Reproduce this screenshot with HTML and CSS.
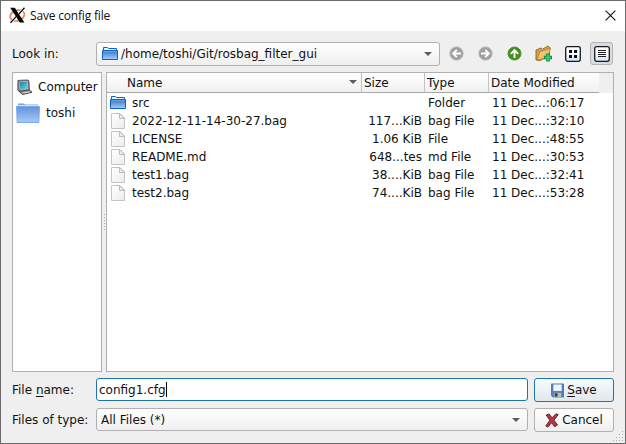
FILE: index.html
```html
<!DOCTYPE html>
<html lang="en">
<head>
<meta charset="utf-8">
<title>Save config file</title>
<link rel="stylesheet" href="styles.css">
</head>
<body>
<svg class="defs" width="0" height="0" aria-hidden="true">
  <defs>
    <linearGradient id="blue" x1="0" y1="0" x2="0" y2="1"><stop offset="0" stop-color="#3272c4"/><stop offset="1" stop-color="#a9cdfb"/></linearGradient>
    <linearGradient id="home" x1="0" y1="0" x2="0" y2="1"><stop offset="0" stop-color="#6594d9"/><stop offset="1" stop-color="#a5c8fa"/></linearGradient>
    <linearGradient id="screen" x1="0" y1="0" x2="1" y2="1"><stop offset="0" stop-color="#0b7a9c"/><stop offset="1" stop-color="#7fd6ee"/></linearGradient>
    <linearGradient id="paper" x1="0" y1="0" x2="1" y2="1"><stop offset="0" stop-color="#fff"/><stop offset="1" stop-color="#ececec"/></linearGradient>
    <linearGradient id="gold" x1="0" y1="0" x2="1" y2="1"><stop offset="0" stop-color="#ffe5a3"/><stop offset="1" stop-color="#dba044"/></linearGradient>
    <linearGradient id="tile" x1="0" y1="0" x2="0" y2="1"><stop offset="0.4" stop-color="#fff"/><stop offset="1" stop-color="#cfe3fa"/></linearGradient>
    <symbol id="folder" viewBox="0 0 16 16">
      <path d="M1.5 4V1.5H5.5L6.5 2.5H14.5V4" fill="#e4f0ff" stroke="#0c63c4"/>
      <path d="M.5 4.5H15.5V13.5H.5Z" fill="url(#blue)" stroke="#0c63c4"/>
      <path d="M1.5 5.5H14.5" stroke="#6ba3e8"/>
    </symbol>
    <symbol id="file" viewBox="0 0 16 18">
      <path d="M1.5 1.5H10L14.5 6V16.5H1.5Z" fill="url(#paper)" stroke="#c4c4c4"/>
      <path d="M9.5 1.5V6.5H14.5Z" fill="#eee" stroke="#b0b0b0" stroke-width=".8"/>
    </symbol>
  </defs>
</svg>
<main class="window">
  <header class="titlebar">
    <svg class="logo" width="17" height="17" viewBox="0 0 17 17">
      <ellipse cx="8.3" cy="8.5" rx="7.3" ry="5.2" transform="rotate(-20 8.3 8.5)" fill="none" stroke="#ee8050" stroke-width="1.7"/>
      <path d="M1.2 .8H5.8L15.4 15.6H10.8Z" fill="#050505"/>
      <path d="M15.5 .8L9.8 7.2M6.8 10L1.6 15.8" stroke="#fff" stroke-width="2.6"/>
      <path d="M15.5 .8L9.4 7.6M7.4 9.4L1.5 15.8" stroke="#111" stroke-width="1.4"/>
    </svg>
    <span class="title">Save config file</span>
    <svg class="close" width="11" height="11" viewBox="0 0 11 11"><path d="M.6 .6L10.4 10.4M10.4 .6L.6 10.4" stroke="#111" stroke-width="1.1"/></svg>
  </header>

  <section class="lookin">
    <span class="label">Look in:</span>
    <div class="combo path">
      <svg width="16" height="16"><use href="#folder"/></svg>
      <span>/home/toshi/Git/rosbag_filter_gui</span>
      <i class="arrow"></i>
    </div>
    <nav class="tools">
      <span class="tool"><svg width="16" height="16" viewBox="0 0 16 16"><circle cx="7.5" cy="7.5" r="6.6" fill="#a0a0a0" stroke="#b2b2b2"/><path d="M12 7.5H4.5M7.8 3.8L4.1 7.5L7.8 11.2" fill="none" stroke="#fff" stroke-width="1.9"/></svg></span>
      <span class="tool"><svg width="16" height="16" viewBox="0 0 16 16"><circle cx="7.5" cy="7.5" r="6.6" fill="#a0a0a0" stroke="#b2b2b2"/><path d="M3 7.5H10.5M7.2 3.8L10.9 7.5L7.2 11.2" fill="none" stroke="#fff" stroke-width="1.9"/></svg></span>
      <span class="tool"><svg width="16" height="16" viewBox="0 0 16 16"><circle cx="7.5" cy="7.5" r="6.5" fill="#428f1e" stroke="#4c9130"/><path d="M7.5 12V4.5M3.8 7.8L7.5 4.1L11.2 7.8" fill="none" stroke="#fff" stroke-width="1.9"/></svg></span>
      <span class="tool"><svg width="17" height="17" viewBox="0 0 17 17"><path d="M1 15V5L6 3L7.5 4.2L13 1L14.5 2V11L5 15.5Z" fill="#d9a048" stroke="#8b6427" stroke-width=".9"/><path d="M2 15L5 6.5L9.5 5.5L15.5 3L13.5 11.5L6 14.5Z" fill="url(#gold)" stroke="#a97a32" stroke-width=".8"/><path d="M13 8.5V16.5M9 12.5H17" stroke="#15833c" stroke-width="3.6"/><path d="M13 9.3V15.7M9.8 12.5H16.2" stroke="#35c967" stroke-width="2"/></svg></span>
      <span class="tool"><svg width="16" height="16" viewBox="0 0 16 16"><rect x=".7" y=".7" width="14.6" height="14.6" rx="2" fill="url(#tile)" stroke="#151a24" stroke-width="1.3"/><path d="M4 4h3v3H4zM9 4h3v3H9zM4 9h3v3H4zM9 9h3v3H9z" fill="#111"/></svg></span>
      <span class="tool active"><svg width="16" height="16" viewBox="0 0 16 16"><rect x=".7" y=".7" width="14.6" height="14.6" rx="2" fill="url(#tile)" stroke="#151a24" stroke-width="1.3"/><path d="M4 4.5H12M4 6.5H12M4 8.5H12M4 10.5H12" stroke="#222"/></svg></span>
    </nav>
  </section>

  <section class="panes">
    <aside class="sidebar">
      <div class="place">
        <svg width="17" height="17" viewBox="0 0 18 18"><path d="M3 13L14 11.5L17 14L7 16.5Z" fill="#999" stroke="#444"/><path d="M2 1.5L12.5 1L13.7 2L14.2 11.5L4 13L2 12Z" fill="#777" stroke="#444" stroke-width=".8"/><path d="M3.5 3L12 2.5L12.5 10.5L4 11.3Z" fill="url(#screen)" stroke="#a9d3dd" stroke-width=".7"/><path d="M8 14.8L14.5 13.5" stroke="#ddd"/></svg>
        <span>Computer</span>
      </div>
      <div class="place home">
        <svg width="24" height="22" viewBox="0 0 24 22"><path d="M2 5V1.5H8L9 2.5H22V6H2Z" fill="#77a7e5"/><path d="M2.5 3.5H21.5" stroke="#cfe1fa"/><path d="M.5 4.5H23.5L22.8 20.5H1.2Z" fill="url(#home)" stroke="#79a9e9"/></svg>
        <span>toshi</span>
      </div>
    </aside>
    <div class="splitter"><i></i><i></i><i></i><i></i><i></i><i></i></div>
    <div class="list">
      <div class="row head"><span class="name">Name<i class="arrow"></i></span><span>Size</span><span>Type</span><span>Date Modified</span></div>
      <div class="row"><span class="name"><svg width="16" height="16"><use href="#folder"/></svg>src</span><span class="size"></span><span>Folder</span><span>11 Dec...:06:17</span></div>
      <div class="row"><span class="name"><svg width="16" height="18"><use href="#file"/></svg>2022-12-11-14-30-27.bag</span><span class="size">117...KiB</span><span>bag File</span><span>11 Dec...:32:10</span></div>
      <div class="row"><span class="name"><svg width="16" height="18"><use href="#file"/></svg>LICENSE</span><span class="size">1.06 KiB</span><span>File</span><span>11 Dec...:48:55</span></div>
      <div class="row"><span class="name"><svg width="16" height="18"><use href="#file"/></svg>README.md</span><span class="size">648...tes</span><span>md File</span><span>11 Dec...:30:53</span></div>
      <div class="row"><span class="name"><svg width="16" height="18"><use href="#file"/></svg>test1.bag</span><span class="size">38....KiB</span><span>bag File</span><span>11 Dec...:32:41</span></div>
      <div class="row"><span class="name"><svg width="16" height="18"><use href="#file"/></svg>test2.bag</span><span class="size">74....KiB</span><span>bag File</span><span>11 Dec...:53:28</span></div>
    </div>
  </section>

  <section class="form">
    <span class="label">File <u>n</u>ame:</span>
    <div class="input">config1.cfg<i class="caret"></i></div>
    <div class="button primary">
      <svg width="13" height="15" viewBox="0 0 14 15"><path d="M.5 .5H13.5V14.5H2L.5 13Z" fill="#5480bb" stroke="#4a73ad"/><path d="M2.5 1H11.5V8H2.5Z" fill="#f1f5f8"/><path d="M3 10H11V14.5H3Z" fill="#b8beb9"/><path d="M4 10.5H7V14H4Z" fill="#273c45"/></svg>
      <span><u>S</u>ave</span>
    </div>
    <span class="label">Files of type:</span>
    <div class="combo type"><span>All Files (*)</span><i class="arrow"></i></div>
    <div class="button">
      <svg width="14" height="15" viewBox="0 0 14 15"><path d="M1.2 2L4.2 1L7 4.8L11 .8L13.2 1.6L9 7.2L12.5 12L9.7 13.8L6.6 9.7L3 14L.8 13L4.8 7.3Z" fill="#b73643" stroke="#571d23" stroke-width=".9"/></svg>
      <span>Cancel</span>
    </div>
  </section>
  <svg class="grip" width="12" height="12" viewBox="0 0 12 12"><path d="M10 1h1v1h-1zM7 4h1v1h-1zM10 4h1v1h-1zM4 7h1v1h-1zM7 7h1v1h-1zM10 7h1v1h-1zM1 10h1v1h-1zM4 10h1v1h-1zM7 10h1v1h-1zM10 10h1v1h-1z" fill="#aaa"/></svg>
</main>
</body>
</html>
```
FILE: styles.css
```css
* { box-sizing: border-box; }
body { margin: 0; font: 12px/18px "DejaVu Sans", sans-serif; color: #111; }
svg { display: block; flex: none; }
.defs { position: absolute; }
.window { position: relative; width: 626px; height: 444px; border: 1px solid #6b6b6b; background: #efefef; overflow: hidden; white-space: nowrap; }
.titlebar { display: flex; align-items: center; height: 30px; padding: 0 9px 2px 8px; background: #fff; }
.title { margin: 2px 0 0 4px; font: 12px/18px "Open Sans", sans-serif; letter-spacing: -0.18px; }
.close { margin-left: auto; }
.arrow { flex: none; width: 0; height: 0; margin-left: auto; border: 4px solid transparent; border-top: 4px solid #5c5c5c; border-bottom: 0; }

.lookin { display: flex; align-items: center; height: 24px; margin: 11px 11px 0; }
.label { width: 84px; flex: none; }
.combo { display: flex; align-items: center; border: 1px solid #b0b0b0; border-radius: 3px; background: linear-gradient(#fff, #efefef); }
.path { width: 344px; height: 24px; padding: 0 7px 0 5px; }
.path span { margin-left: 3px; }
.tools { display: flex; align-self: flex-start; gap: 6px; margin-left: 5px; }
.tool { display: flex; align-items: center; justify-content: center; width: 23px; height: 23px; }
.tool.active { border: 1px solid #b4b4b4; border-radius: 3px; background: #dcdcdc; }

.panes { display: flex; height: 300px; margin: 6px 11px 0; }
.sidebar { width: 90px; padding-top: 1px; border: 1px solid #b0b0b0; background: #fff; overflow: hidden; }
.place { display: flex; align-items: center; height: 26px; padding-left: 3px; gap: 5px; }
.place.home { gap: 6px; }
.splitter { display: flex; flex-direction: column; align-items: center; justify-content: center; gap: 2px; width: 4px; }
.splitter i { width: 1px; height: 1px; background: #aaa; }
.list { width: 508px; border: 1px solid #b0b0b0; background: #fff; }
.row { display: grid; grid-template-columns: 255px 63px 64px 110px; height: 18px; line-height: 18px; }
.row > span { padding-left: 3px; }
.row .name { display: flex; align-items: center; gap: 6px; }
.row .size { padding: 0 3px 0 0; text-align: right; }
.head { height: 20px; margin-bottom: 1px; background: linear-gradient(to right, transparent 492px, #efefef 492px), linear-gradient(#fff, #efefef); }
.head > span { height: 20px; padding-left: 2px; border-right: 1px solid #c4c4c4; border-bottom: 1px solid #a8a8a8; line-height: 20px; }
.head > span:last-child { border-right: 0; }
.head .name { padding: 0 4px 0 20px; }
.head .arrow { margin-bottom: 2px; }

.form { display: grid; grid-template-columns: 84px 432px 80px; grid-template-rows: 24px 24px; row-gap: 6px; align-items: center; margin: 6px 11px 0; }
.form .button { margin-left: 6px; width: 80px; }
u { text-decoration-thickness: 1px; text-underline-offset: 2px; }
.input { display: flex; align-items: center; align-self: start; height: 23px; padding-left: 2px; border: 1px solid #1f74aa; border-radius: 3px; background: #fff; }
.caret { width: 1px; height: 15px; background: #000; }
.type { align-self: start; height: 23px; padding: 0 7px 0 4px; }
.button { display: flex; align-items: center; justify-content: center; gap: 3px; height: 24px; border: 1px solid #b0b0b0; border-radius: 3px; background: linear-gradient(#fff, #efefef); }
.primary { border-color: #1f74aa; background: linear-gradient(#f8fbfd, #e0e8ed); }
.grip { position: absolute; right: 1px; bottom: 1px; }
```
